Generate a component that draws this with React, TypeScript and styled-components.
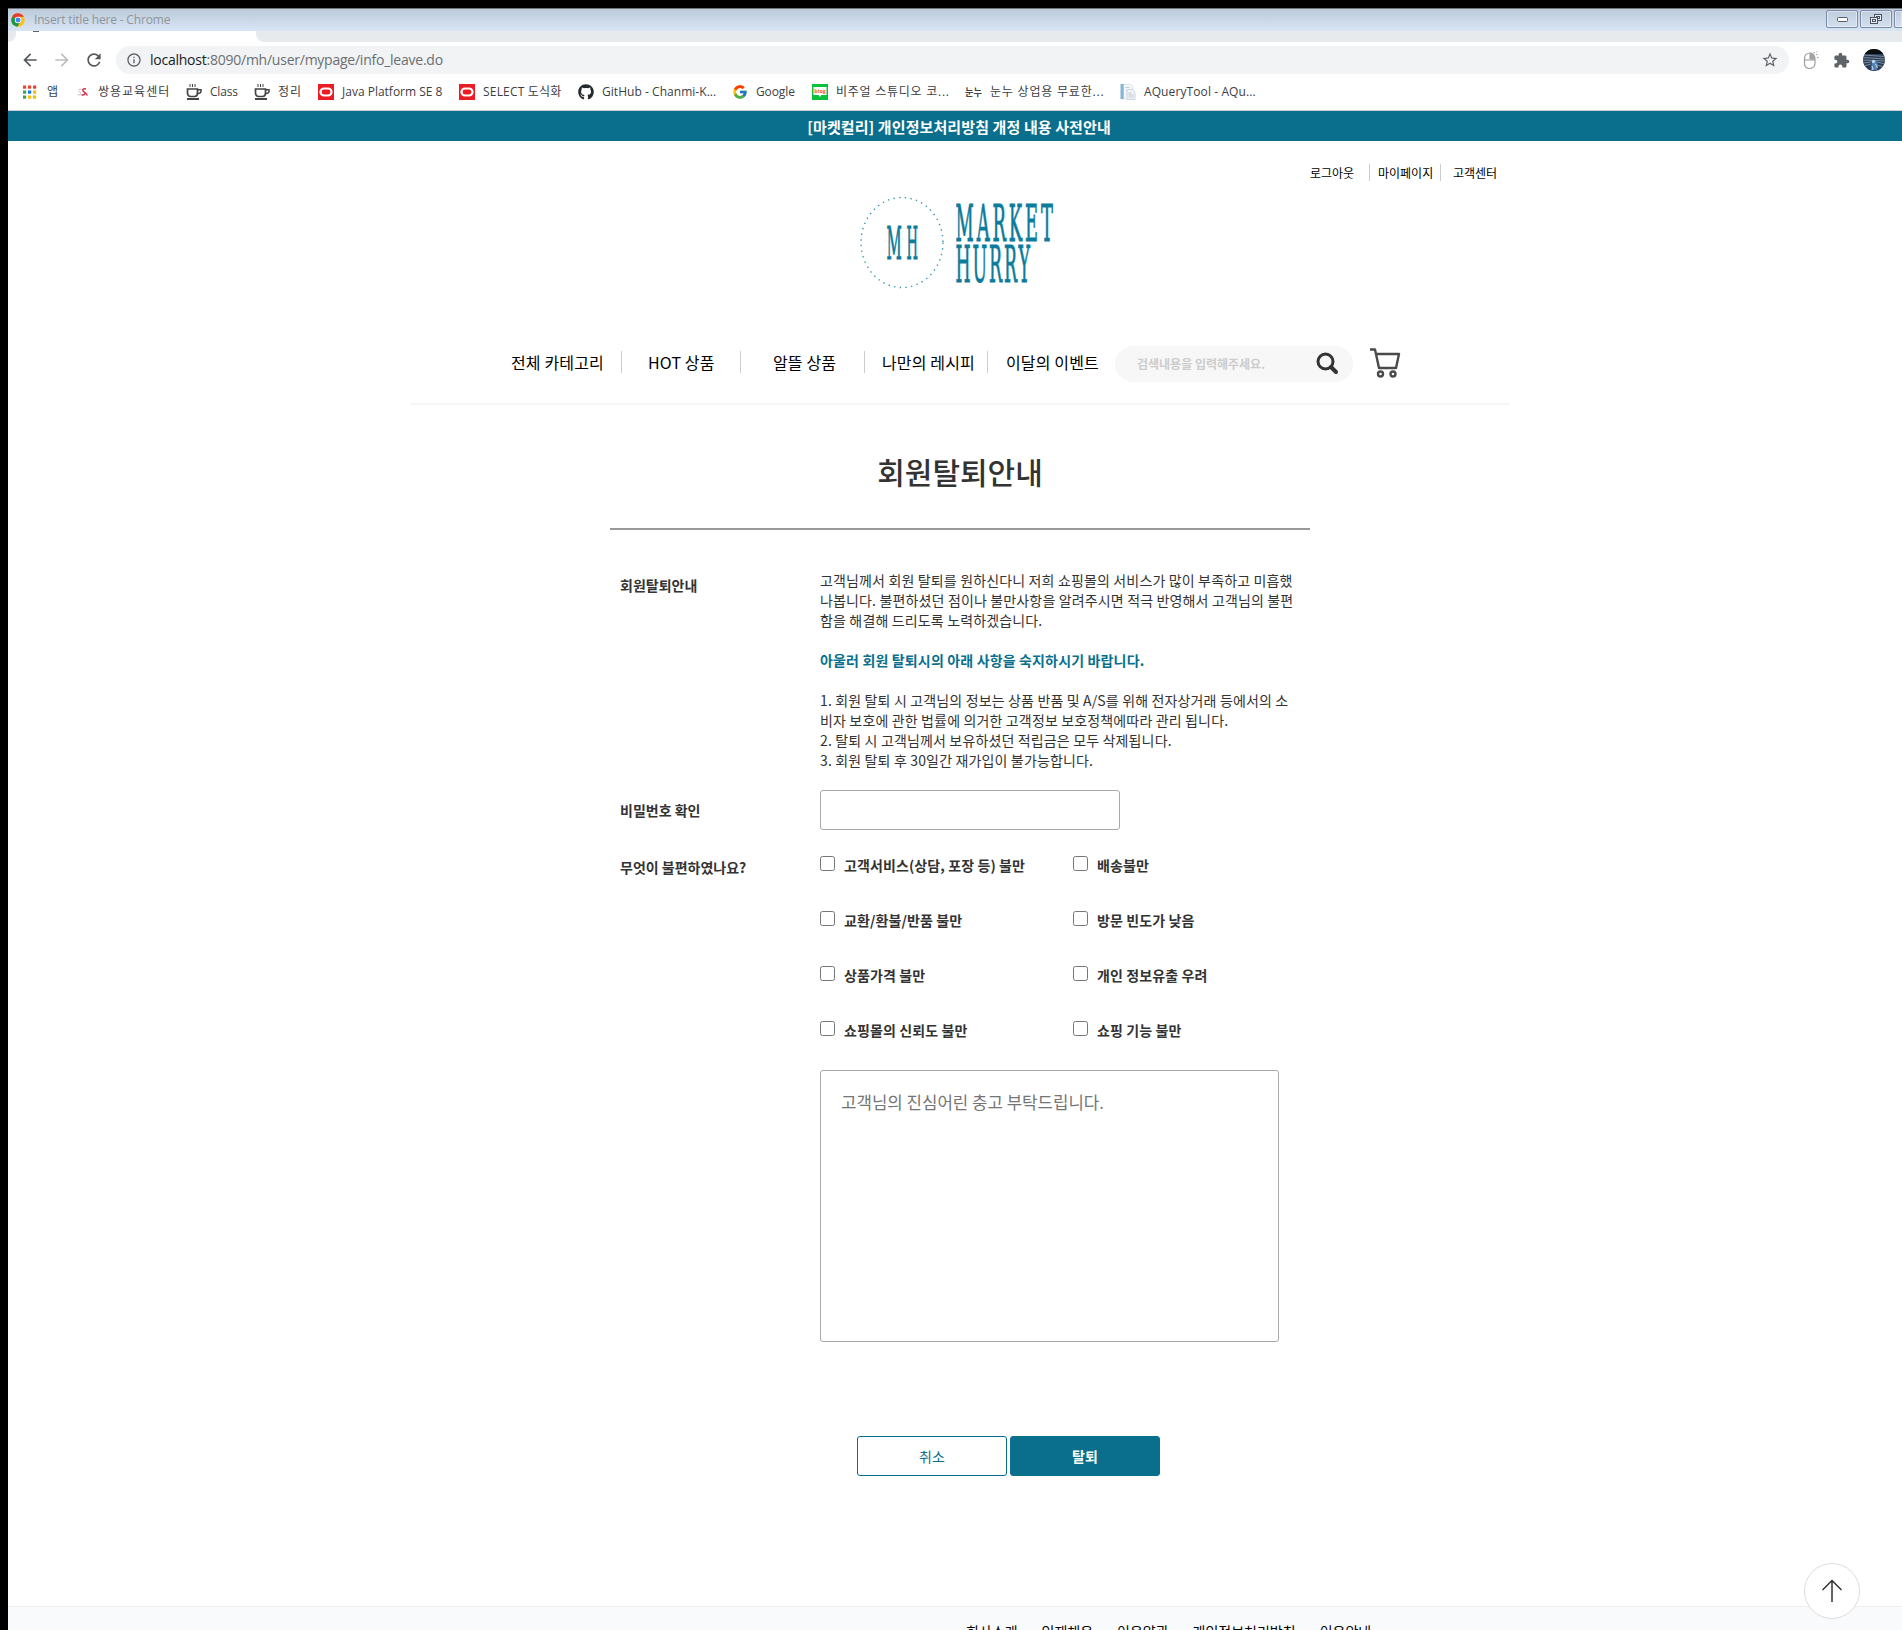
import React from "react";
import styled, { createGlobalStyle } from "styled-components";
import { FaGithub } from "react-icons/fa";
import { FcGoogle } from "react-icons/fc";
import { MdExtension, MdStarBorder, MdArrowBack, MdArrowForward, MdRefresh, MdInfoOutline } from "react-icons/md";

const TEAL = "#096f8d";

const GlobalStyle = createGlobalStyle`
  *, *::before, *::after { box-sizing: border-box; }
  html, body { margin: 0; background: #000; overflow: hidden; }
  body, input, textarea, button {
    font-family: "Noto Sans CJK KR", "Noto Sans", sans-serif;
  }
`;

/* ---------- browser window ---------- */

const Desktop = styled.div`
  height: 1630px;
  padding: 8px 0 0 8px;
  background: #000;
  overflow: hidden;
`;

const Window = styled.div`
  position: relative;
  display: flex;
  flex-direction: column;
  height: 1622px;
  background: #fff;
  overflow: hidden;
`;

const TitleBar = styled.div`
  display: flex;
  align-items: center;
  flex: none;
  height: 23px;
  padding-left: 3px;
  border-top: 1px solid #6d747c;
  background: linear-gradient(#bccad9, #d8e5f4);
`;

const WindowTitle = styled.span`
  flex: 1;
  margin-left: 9px;
  font: 12px/20px "Open Sans", sans-serif;
  color: #8f959b;
  letter-spacing: -0.17px;
`;

const WindowButton = styled.span`
  display: flex;
  align-items: center;
  justify-content: center;
  width: 32px;
  height: 18px;
  margin: -2px 0 0 2px;
  border: 1px solid #7d8aa8;
  border-radius: 2px;
  box-shadow: inset 0 0 0 1px rgba(255, 255, 255, 0.45);
`;

const EdgeButton = styled(WindowButton)`
  width: 8px;
  border-right: 0;
  border-radius: 2px 0 0 2px;
`;

const TabStrip = styled.div`
  display: flex;
  flex: none;
  height: 11px;
  background: #fff;
`;

const StripLeft = styled.div`
  width: 8px;
  background: #e7eaed;
  border-bottom-right-radius: 8px;
`;

const Tab = styled.div`
  width: 240px;
  padding-left: 17px;
`;

const TabIconTip = styled.div`
  width: 6px;
  height: 1px;
  background: #5f6368;
`;

const StripRight = styled.div`
  flex: 1;
  background: #e7eaed;
  border-bottom-left-radius: 8px;
`;

const Toolbar = styled.div`
  display: flex;
  align-items: center;
  flex: none;
  height: 36px;
  padding-left: 12px;
  color: #5f6368;
`;

const NavIcon = styled.span<{ $dim?: boolean }>`
  display: flex;
  width: 32px;
  font-size: 20px;
  color: ${(p) => (p.$dim ? "#bcbec1" : "#55595e")};
`;

const AddressBar = styled.div`
  display: flex;
  align-items: center;
  width: 1673px;
  height: 28px;
  padding: 0 10px;
  border-radius: 14px;
  background: #f1f3f4;
  font-size: 18px;
`;

const Url = styled.span`
  flex: 1;
  margin-left: 8px;
  font: 14px/20px "Open Sans", sans-serif;
  letter-spacing: -0.24px;
  color: #6b6f73;
  b { font-weight: 400; color: #202124; }
`;

const ToolIcons = styled.div`
  display: flex;
  align-items: center;
  gap: 13px;
  margin-left: 13px;
`;

const Bookmarks = styled.div`
  display: flex;
  flex: none;
  height: 33px;
  padding: 0 0 4px 15px;
  align-items: center;
  border-bottom: 1px solid #cdd0d3;
`;

const Bookmark = styled.div<{ $w: number; $ls?: number }>`
  display: flex;
  align-items: center;
  flex: none;
  width: ${(p) => p.$w}px;
  gap: 8px;
  white-space: nowrap;
  font: 12px/18px "Open Sans", "Noto Sans CJK KR", sans-serif;
  letter-spacing: ${(p) => p.$ls ?? 0}px;
  color: #3c4043;
  svg { flex: none; }
`;

/* ---------- site header ---------- */

const Banner = styled.div`
  flex: none;
  height: 30px;
  padding-left: 8px;
  background: ${TEAL};
  color: #fff;
  font-size: 15px;
  font-weight: 700;
  line-height: 31px;
  text-align: center;
  letter-spacing: 0.1px;
`;

const Site = styled.div`
  display: flex;
  flex-direction: column;
  flex: 1;
  color: #333;
`;

const Header = styled.header`
  width: 1098px;
  height: 264px;
  margin-left: 403px;
  border-bottom: 2px solid #f5f5f5;
`;

const UserLinks = styled.nav`
  display: flex;
  justify-content: flex-end;
  align-items: center;
  height: 16px;
  margin-top: 23px;
  padding-right: 4px;
`;

const UserLink = styled.a<{ $w: number; $last?: boolean }>`
  width: ${(p) => p.$w}px;
  padding-left: ${(p) => (p.$last ? 12 : 8)}px;
  border-right: ${(p) => (p.$last ? "0" : "1px solid #ccc")};
  font-size: 12px;
  line-height: 17px;
  color: #000;
  white-space: nowrap;
`;

const LogoRow = styled.div`
  display: flex;
  height: 106px;
  margin: 10px 0 0 438px;
`;

const MainNav = styled.nav`
  display: flex;
  align-items: center;
  height: 36px;
  margin: 50px 0 0 94px;
`;

const NavLink = styled.a<{ $w: number; $pad: number; $last?: boolean }>`
  width: ${(p) => p.$w}px;
  height: 22px;
  margin-top: -4px;
  padding-left: ${(p) => p.$pad}px;
  border-right: ${(p) => (p.$last ? "0" : "1px solid #ccc")};
  font-size: 16px;
  line-height: 23px;
  color: #000;
  white-space: nowrap;
  letter-spacing: 0.15px;
`;

const SearchBox = styled.div`
  display: flex;
  align-items: center;
  justify-content: space-between;
  width: 238px;
  height: 36px;
  padding: 0 14px 2px 22px;
  border-radius: 18px;
  background: #f7f7f7;
`;

const SearchHint = styled.span`
  font-size: 12px;
  font-weight: 700;
  color: #ccc;
`;

const CartSlot = styled.span`
  display: flex;
  margin: -2px 0 0 16px;
`;

/* ---------- form ---------- */

const Main = styled.main`
  width: 700px;
  height: 1201px;
  margin-left: 602px;
`;

const PageTitle = styled.h1`
  height: 125px;
  margin: 0;
  padding: 43px 0 0 0;
  border-bottom: 2px solid #999;
  font-size: 30px;
  font-weight: 500;
  line-height: 46px;
  text-align: center;
`;

const Row = styled.div<{ $top: number }>`
  display: grid;
  grid-template-columns: 200px 490px;
  margin-top: ${(p) => p.$top}px;
  padding-left: 10px;
`;

const Label = styled.div<{ $top: number }>`
  padding-top: ${(p) => p.$top}px;
  font-size: 14px;
  font-weight: 700;
  line-height: 20px;
`;

const Notice = styled.div`
  font-size: 14px;
  line-height: 20px;
  letter-spacing: 0.15px;
  white-space: pre;
`;

const Emphasis = styled.p`
  margin: 20px 0;
  color: ${TEAL};
  font-weight: 700;
`;

const PasswordInput = styled.input`
  width: 300px;
  height: 40px;
  border: 1px solid #a9a9a9;
  border-radius: 3px;
  outline: none;
`;

const Reasons = styled.div`
  display: grid;
  grid-template-columns: 253px 237px;
  grid-auto-rows: 55px;
`;

const Reason = styled.label`
  display: flex;
  align-items: flex-start;
  font-size: 14px;
  font-weight: 700;
  line-height: 18px;
  letter-spacing: 0.1px;
`;

const CheckBox = styled.input`
  appearance: none;
  width: 15px;
  height: 15px;
  margin: 0 9px 0 0;
  border: 1px solid #767676;
  border-radius: 2.5px;
  background: #fff;
`;

const Comment = styled.textarea`
  display: block;
  width: 459px;
  height: 272px;
  margin: -6px 0 0;
  padding: 19px 20px;
  border: 1px solid #a9a9a9;
  border-radius: 3px;
  font-size: 16.8px;
  line-height: 24px;
  resize: none;
  &::placeholder { color: #757575; }
`;

const Actions = styled.div`
  display: flex;
  gap: 3px;
  margin: 94px 0 0 247px;
`;

const ActionButton = styled.button<{ $solid?: boolean }>`
  width: 150px;
  height: 40px;
  padding: 0;
  border: 1px solid ${TEAL};
  border-radius: 3px;
  background: ${(p) => (p.$solid ? TEAL : "#fff")};
  color: ${(p) => (p.$solid ? "#fff" : TEAL)};
  font-size: 14px;
  font-weight: ${(p) => (p.$solid ? 700 : 400)};
`;

const Footer = styled.footer`
  display: flex;
  flex: 1;
  gap: 24px;
  padding: 14px 0 0 958px;
  border-top: 1px solid #eceef0;
  background: #f9fafb;
  color: #000;
  font-size: 14px;
  line-height: 20px;
  white-space: nowrap;
`;

const ScrollTop = styled.button`
  position: absolute;
  right: 42px;
  bottom: 11px;
  display: flex;
  align-items: center;
  justify-content: center;
  width: 56px;
  height: 56px;
  padding: 0;
  border: 1px solid #ddd;
  border-radius: 50%;
  background: #fff;
`;

/* ---------- drawings ---------- */

const ChromeIcon = () => (
  <svg width="14" height="14" viewBox="0 0 48 48">
    <circle cx="24" cy="24" r="23" fill="#fbc116" />
    <path d="M24 24 4 12.5A23 23 0 0 1 44 13H24Z" fill="#e33b2e" />
    <path d="M24 24 4 12.5A23 23 0 0 0 22 47l11-18Z" fill="#229342" />
    <circle cx="24" cy="24" r="11" fill="#fff" />
    <circle cx="24" cy="24" r="8.5" fill="#4285f4" />
  </svg>
);

const AppsIcon = () => {
  const colors = ["#ea4335", "#ea4335", "#ea4335", "#34a853", "#1a73e8", "#fbbc04", "#34a853", "#fbbc04", "#fbbc04"];
  return (
    <svg width="16" height="16">
      {colors.map((c, i) => (
        <rect key={i} x={(i % 3) * 5} y={1.5 + Math.floor(i / 3) * 5} width="3.2" height="3.2" fill={c} />
      ))}
    </svg>
  );
};

const SsangIcon = () => (
  <svg width="16" height="16" viewBox="0 0 16 16" fill="none">
    <path d="M7.500 5.500c-2.500-1-4 .8-2 2.200s1.500 3.800-2 3" stroke="#cdb8bb" strokeWidth="1" />
    <path d="M12 5c-2.500-1-4.500 1-2.200 2.700s1.200 4-2.300 3" stroke="#d8304c" strokeWidth="1.500" />
    <path d="m11 8.500 2.500 3" stroke="#d8304c" strokeWidth="1.200" />
  </svg>
);

const CupIcon = () => (
  <svg width="16" height="16" viewBox="0 0 16 16" fill="none" stroke="#444">
    <path d="M4 0v3M6.500 0v3M9 0v3" strokeWidth="1" />
    <path d="M1.500 5h10v4c0 2.500-1.500 3.500-3 3.500H4.500C3 12.500 1.500 11.500 1.500 9Z" strokeWidth="1.700" />
    <path d="M11.500 5.700h3.500v1.500c0 1.500-1.500 2.300-3.500 2.300" strokeWidth="1.500" />
    <path d="M1 15h12" strokeWidth="2" />
  </svg>
);

const OracleIcon = () => (
  <svg width="16" height="16">
    <rect width="16" height="16" fill="#ed1c24" />
    <rect x="2.500" y="4.500" width="11" height="7" rx="3.500" fill="none" stroke="#fff" strokeWidth="2.200" />
  </svg>
);

const BlogIcon = () => (
  <svg width="16" height="16">
    <rect width="16" height="16" fill="#06c33b" />
    <path d="M1.500 3h13v8H9.500L8 13 6.500 11H1.500Z" fill="#fff" />
    <text x="2.300" y="9.200" fontSize="6" fontWeight="700" textLength="11.500" lengthAdjust="spacingAndGlyphs" fill="#e8622c" fontFamily="Open Sans" style={{ letterSpacing: 0 }}>blog</text>
  </svg>
);

const NoonnuIcon = () => (
  <svg width="17" height="16">
    <text x="0" y="12" fontSize="10" fontWeight="700" fill="#444" textLength="17" lengthAdjust="spacingAndGlyphs" fontFamily="Noto Sans CJK KR" style={{ letterSpacing: 0 }}>눈누</text>
  </svg>
);

const DocIcon = () => (
  <svg width="16" height="16" viewBox="0 0 16 16">
    <path d="M2 .5h9l2 2V15H2Z" fill="#f4f6f8" stroke="#d5dbe0" strokeWidth=".7" />
    <path d="M.5 0h3.200v15H.5Z" fill="#86b4d6" />
    <path d="M7 5.500h5.500l2.500 2.500v7.500H7Z" fill="#f1f4f6" stroke="#c3cdd5" strokeWidth=".8" />
    <path d="M5.500 3.500h4M8.500 9h3M8.500 11h5M8.500 13h5" stroke="#b9c6d0" strokeWidth=".9" />
  </svg>
);

const MouseIcon = () => (
  <svg width="18" height="20" viewBox="0 0 18 20" fill="none" stroke="#9b9da0">
    <path d="M8 3C4 3 2.500 5.500 2.500 9v4c0 3.500 2 5.500 5 5.500s5.500-2 5.500-5.500V9" strokeWidth="1.200" />
    <path d="M8 3c3.300 0 5 2.500 5 6H8Z" fill="#a2a4a7" />
    <path d="M2.500 10h10.500" strokeWidth="1.100" />
    <path d="M12 3.500 12.500 2M14 5l1.500-1M15 7.500h1.500M14.500 2l1-.7" strokeWidth="1" />
  </svg>
);

const Avatar = () => (
  <svg width="22" height="22" viewBox="0 0 22 22">
    <defs><clipPath id="avatar"><circle cx="11" cy="11" r="11" /></clipPath></defs>
    <g clipPath="url(#avatar)">
      <rect width="22" height="22" fill="#2b3d58" />
      <rect width="22" height="5" fill="#0b0f12" />
      <path d="M0 6l22 1.500M0 8.500l22 1.500M0 11l22 1M0 14l8-1M14 13l8 2M1 17l7-2M14 16l7 2" stroke="#8496a5" strokeWidth=".9" />
      <path d="m9 12 4-1 2 5-1 5H8Z" fill="#4f80b8" />
      <circle cx="10.500" cy="12.500" r="1.800" fill="#b8d4ea" />
      <path d="m12.500 15 2 4M9 17l1 4" stroke="#dfe8ef" strokeWidth=".9" />
    </g>
  </svg>
);

const Logo = () => (
  <svg width="220" height="105" viewBox="0 0 220 105" fill="#0b7b9b" stroke="#0b7b9b" fontFamily="DejaVu Serif, serif">
    <ellipse cx="53" cy="52.500" rx="41" ry="45" fill="none" stroke="#3c97b0" strokeWidth="1.400" strokeDasharray="1.400 4.300" />
    <g strokeWidth="1">
      <text transform="translate(37.500 69) scale(.34 1)" fontSize="44">M</text>
      <text transform="translate(57.500 69) scale(.3 1)" fontSize="44">H</text>
      <text transform="translate(106.500 50.500) scale(.35 1)" fontSize="51" textLength="278" lengthAdjust="spacing">MARKET</text>
      <text transform="translate(106.500 92) scale(.34 1)" fontSize="51" textLength="219" lengthAdjust="spacing">HURRY</text>
    </g>
  </svg>
);

const SearchIcon = () => (
  <svg width="23" height="23" viewBox="0 0 23 23" fill="none" stroke="#333">
    <circle cx="9.500" cy="9.500" r="7.500" strokeWidth="3" />
    <path d="m15 15 5 5" strokeWidth="4" strokeLinecap="round" />
  </svg>
);

const CartIcon = () => (
  <svg width="32" height="32" viewBox="0 0 32 32" fill="none" stroke="#4a4a4a" strokeWidth="2.400" strokeLinejoin="round">
    <path d="M1 2.500h5l4 18.500h17l3-14H7.200" />
    <circle cx="11.500" cy="27" r="2.500" />
    <circle cx="24" cy="27" r="2.500" />
  </svg>
);

const REASONS = [
  "고객서비스(상담, 포장 등) 불만",
  "배송불만",
  "교환/환불/반품 불만",
  "방문 빈도가 낮음",
  "상품가격 불만",
  "개인 정보유출 우려",
  "쇼핑몰의 신뢰도 불만",
  "쇼핑 기능 불만",
];

const BOOKMARKS: { w: number; icon: React.ReactNode; text: string; ls?: number }[] = [
  { w: 51, icon: <AppsIcon />, text: "앱" },
  { w: 112, icon: <SsangIcon />, text: "쌍용교육센터", ls: 1 },
  { w: 68, icon: <CupIcon />, text: "Class", ls: -0.2 },
  { w: 64, icon: <CupIcon />, text: "정리", ls: 0.9 },
  { w: 141, icon: <OracleIcon />, text: "Java Platform SE 8", ls: 0 },
  { w: 119, icon: <OracleIcon />, text: "SELECT 도식화", ls: 0.2 },
  { w: 154, icon: <FaGithub size={16} color="#24292e" />, text: "GitHub - Chanmi-K...", ls: 0.04 },
  { w: 80, icon: <FcGoogle size={16} />, text: "Google", ls: -0.1 },
  { w: 153, icon: <BlogIcon />, text: "비주얼 스튜디오 코...", ls: 0.75 },
  { w: 155, icon: <NoonnuIcon />, text: "눈누 상업용 무료한...", ls: 0.8 },
  { w: 140, icon: <DocIcon />, text: "AQueryTool - AQu...", ls: 0.1 },
];

export default function App() {
  return (
    <>
      <GlobalStyle />
      <Desktop>
        <Window>
          <TitleBar>
            <ChromeIcon />
            <WindowTitle>Insert title here - Chrome</WindowTitle>
            <WindowButton>
              <svg width="11" height="5"><rect x=".5" y=".5" width="10" height="4" rx="1" fill="#fff" stroke="#555b6b" /></svg>
            </WindowButton>
            <WindowButton>
              <svg width="13" height="11" fill="#e9eef5" stroke="#4c5265">
                <rect x="4.500" y=".5" width="7" height="6" />
                <rect x="6.500" y="2.500" width="3" height="2" />
                <rect x=".5" y="3.500" width="7" height="6" />
                <rect x="2.500" y="5.500" width="3" height="2" />
              </svg>
            </WindowButton>
            <EdgeButton />
          </TitleBar>
          <TabStrip>
            <StripLeft />
            <Tab><TabIconTip /></Tab>
            <StripRight />
          </TabStrip>
          <Toolbar>
            <NavIcon><MdArrowBack /></NavIcon>
            <NavIcon $dim><MdArrowForward /></NavIcon>
            <NavIcon><MdRefresh /></NavIcon>
            <AddressBar>
              <MdInfoOutline size={16} />
              <Url><b>localhost</b>:8090/mh/user/mypage/info_leave.do</Url>
              <MdStarBorder />
            </AddressBar>
            <ToolIcons>
              <MouseIcon />
              <MdExtension size={17} />
              <Avatar />
            </ToolIcons>
          </Toolbar>
          <Bookmarks>
            {BOOKMARKS.map((b) => (
              <Bookmark key={b.text} $w={b.w} $ls={b.ls}>{b.icon}{b.text}</Bookmark>
            ))}
          </Bookmarks>

          <Banner>[마켓컬리] 개인정보처리방침 개정 내용 사전안내</Banner>
          <Site>
            <Header>
              <UserLinks>
                <UserLink $w={68}>로그아웃</UserLink>
                <UserLink $w={71}>마이페이지</UserLink>
                <UserLink $w={64} $last>고객센터</UserLink>
              </UserLinks>
              <LogoRow><Logo /></LogoRow>
              <MainNav>
                <NavLink $w={117} $pad={6}>전체 카테고리</NavLink>
                <NavLink $w={119} $pad={26}>HOT 상품</NavLink>
                <NavLink $w={124} $pad={32}>알뜰 상품</NavLink>
                <NavLink $w={123} $pad={17}>나만의 레시피</NavLink>
                <NavLink $w={127} $pad={18} $last>이달의 이벤트</NavLink>
                <SearchBox>
                  <SearchHint>검색내용을 입력해주세요.</SearchHint>
                  <SearchIcon />
                </SearchBox>
                <CartSlot><CartIcon /></CartSlot>
              </MainNav>
            </Header>

            <Main>
              <PageTitle>회원탈퇴안내</PageTitle>
              <Row $top={40}>
                <Label $top={5}>회원탈퇴안내</Label>
                <Notice>
                  {"고객님께서 회원 탈퇴를 원하신다니 저희 쇼핑몰의 서비스가 많이 부족하고 미흡했\n나봅니다. 불편하셨던 점이나 불만사항을 알려주시면 적극 반영해서 고객님의 불편\n함을 해결해 드리도록 노력하겠습니다."}
                  <Emphasis>아울러 회원 탈퇴시의 아래 사항을 숙지하시기 바랍니다.</Emphasis>
                  {"1. 회원 탈퇴 시 고객님의 정보는 상품 반품 및 A/S를 위해 전자상거래 등에서의 소\n비자 보호에 관한 법률에 의거한 고객정보 보호정책에따라 관리 됩니다.\n2. 탈퇴 시 고객님께서 보유하셨던 적립금은 모두 삭제됩니다.\n3. 회원 탈퇴 후 30일간 재가입이 불가능합니다."}
                </Notice>
              </Row>
              <Row $top={20}>
                <Label $top={10}>비밀번호 확인</Label>
                <PasswordInput type="password" />
              </Row>
              <Row $top={26}>
                <Label $top={1}>무엇이 불편하였나요?</Label>
                <div>
                  <Reasons>
                    {REASONS.map((r) => (
                      <Reason key={r}><CheckBox type="checkbox" />{r}</Reason>
                    ))}
                  </Reasons>
                  <Comment placeholder="고객님의 진심어린 충고 부탁드립니다." />
                </div>
              </Row>
              <Actions>
                <ActionButton>취소</ActionButton>
                <ActionButton $solid>탈퇴</ActionButton>
              </Actions>
            </Main>

            <Footer>
              <span>회사소개</span>
              <span>인재채용</span>
              <span>이용약관</span>
              <span>개인정보처리방침</span>
              <span>이용안내</span>
            </Footer>
          </Site>
          <ScrollTop>
            <svg width="22" height="24" fill="none" stroke="#333" strokeWidth="1.500"><path d="M11 1.500V23M1.500 11 11 1.500 20.500 11" /></svg>
          </ScrollTop>
        </Window>
      </Desktop>
    </>
  );
}
